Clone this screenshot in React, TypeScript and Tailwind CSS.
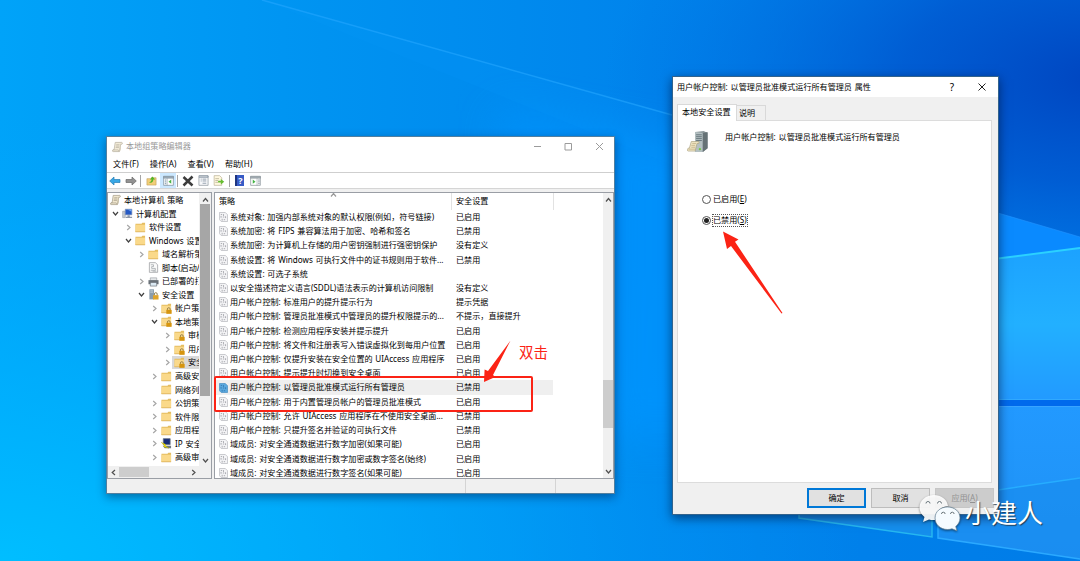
import React from "react";

type TreeItem = {
  label: string;
  level: number;
  icon: "scroll" | "computer" | "folder" | "script" | "printer" | "server" | "locked" | "ip";
  state?: "open" | "closed";
  selected?: boolean;
};

const treeItems: TreeItem[] = [
  { label: "本地计算机 策略", level: 0, icon: "scroll" },
  { label: "计算机配置", level: 1, icon: "computer", state: "open" },
  { label: "软件设置", level: 2, icon: "folder", state: "closed" },
  { label: "Windows 设置", level: 2, icon: "folder", state: "open" },
  { label: "域名解析策略", level: 3, icon: "folder", state: "closed" },
  { label: "脚本(启动/关机)", level: 3, icon: "script" },
  { label: "已部署的打印机", level: 3, icon: "printer", state: "closed" },
  { label: "安全设置", level: 3, icon: "server", state: "open" },
  { label: "帐户策略", level: 4, icon: "locked", state: "closed" },
  { label: "本地策略", level: 4, icon: "locked", state: "open" },
  { label: "审核策略", level: 5, icon: "locked", state: "closed" },
  { label: "用户权限分配", level: 5, icon: "locked", state: "closed" },
  { label: "安全选项", level: 5, icon: "locked", state: "closed", selected: true },
  { label: "高级安全", level: 4, icon: "folder", state: "closed" },
  { label: "网络列表管理器", level: 4, icon: "folder" },
  { label: "公钥策略", level: 4, icon: "folder", state: "closed" },
  { label: "软件限制策略", level: 4, icon: "folder", state: "closed" },
  { label: "应用程序控制", level: 4, icon: "folder", state: "closed" },
  { label: "IP 安全策略", level: 4, icon: "ip", state: "closed" },
  { label: "高级审核策略", level: 4, icon: "folder", state: "closed" },
];

const policies = [
  { name: "系统对象: 加强内部系统对象的默认权限(例如，符号链接)", value: "已启用" },
  { name: "系统加密: 将 FIPS 兼容算法用于加密、哈希和签名", value: "已禁用" },
  { name: "系统加密: 为计算机上存储的用户密钥强制进行强密钥保护", value: "没有定义" },
  { name: "系统设置: 将 Windows 可执行文件中的证书规则用于软件...", value: "已禁用" },
  { name: "系统设置: 可选子系统", value: "" },
  { name: "以安全描述符定义语言(SDDL)语法表示的计算机访问限制", value: "没有定义" },
  { name: "用户帐户控制: 标准用户的提升提示行为", value: "提示凭据" },
  { name: "用户帐户控制: 管理员批准模式中管理员的提升权限提示的...", value: "不提示，直接提升" },
  { name: "用户帐户控制: 检测应用程序安装并提示提升", value: "已启用" },
  { name: "用户帐户控制: 将文件和注册表写入错误虚拟化到每用户位置", value: "已启用" },
  { name: "用户帐户控制: 仅提升安装在安全位置的 UIAccess 应用程序", value: "已启用" },
  { name: "用户帐户控制: 提示提升时切换到安全桌面", value: "已启用" },
  { name: "用户帐户控制: 以管理员批准模式运行所有管理员", value: "已禁用", selected: true },
  { name: "用户帐户控制: 用于内置管理员帐户的管理员批准模式", value: "已启用" },
  { name: "用户帐户控制: 允许 UIAccess 应用程序在不使用安全桌面...", value: "已禁用" },
  { name: "用户帐户控制: 只提升签名并验证的可执行文件", value: "已禁用" },
  { name: "域成员: 对安全通道数据进行数字加密(如果可能)", value: "已启用" },
  { name: "域成员: 对安全通道数据进行数字加密或数字签名(始终)", value: "已启用" },
  { name: "域成员: 对安全通道数据进行数字签名(如果可能)", value: "已启用" },
];

const indents = ["w-0", "w-[13px]", "w-[26px]", "w-[39px]", "w-[52px]", "w-[65px]"];

const Chevron = ({ dir, className = "" }: { dir: "up" | "down" | "left" | "right"; className?: string }) => {
  const paths = {
    up: "M1 5.5 3.5 2.5 6 5.5",
    down: "M1 2 3.5 5 6 2",
    left: "M5 1 2.2 3.5 5 6",
    right: "M2.2 1 5 3.5 2.2 6",
  };
  return (
    <svg viewBox="0 0 7 7" className={`h-[7px] w-[7px] shrink-0 fill-none ${className}`} strokeWidth="1.2">
      <path d={paths[dir]} stroke="currentColor" />
    </svg>
  );
};

const ScrollIcon = ({ className = "" }: { className?: string }) => (
  <svg viewBox="0 0 12 12" className={`h-[12px] w-[11px] shrink-0 ${className}`}>
    <path d="M3.5 1h7.2c.8 0 .8 2 0 2H9.5L8 11H1.2C0 11 .4 9 1.2 9h1.1z" fill="#f0e7cf" stroke="#9b917c" strokeWidth=".7" />
    <path d="M4.6 3.5h3.6M4.3 5h3.6M4 6.5h3.6M1.2 9.2h5.6L8 11" stroke="#958b78" strokeWidth=".6" fill="none" />
    <path d="M9.5 3 8 11c2 0 1.5-5 2-8z" fill="#c9bfa5" />
  </svg>
);

const FolderIcon = ({ locked = false }: { locked?: boolean }) => (
  <svg viewBox="0 0 12 12" className="h-[11px] w-[11px] shrink-0">
    <path d="M.5 2h6.6l.9-1.300H11V11H.5z" fill="#e5bd60" />
    <path d="M.8 3H11V11H.5z" fill="#fad98a" />
    <path d="M.5 10.700h10.500" stroke="#d3a54a" strokeWidth=".7" />
    {locked && (
      <>
        <path d="M7 8V6.600a1.500 1.500 0 0 1 3 0V8" fill="none" stroke="#8b7540" strokeWidth=".9" />
        <rect x="5.800" y="7.500" width="5.800" height="4.300" fill="#d6950f" />
      </>
    )}
  </svg>
);

const PolicyIcon = ({ selected = false }: { selected?: boolean }) => (
  <svg viewBox="0 0 10 11" className="h-[10px] w-[9px] shrink-0">
    <path
      d="M.5.5H7L9.500 3V10.500H2.500L.5 8.500z"
      fill={selected ? "#5ba9df" : "#f4f4f6"}
      stroke={selected ? "#3e87bd" : "#aeb0b6"}
      strokeWidth=".7"
    />
    <path
      d="M2 2.700h1.500M5 2.300v2M2.300 4.300v2M4.300 5.500h1.500M7.300 4.700v2M3.500 7.500v2M5.300 8.500h1.500"
      stroke={selected ? "#2b70a7" : "#8e9097"}
      strokeWidth=".8"
    />
  </svg>
);

const TreeIcon = ({ icon }: { icon: TreeItem["icon"] }) => {
  if (icon === "scroll") return <ScrollIcon />;
  if (icon === "folder") return <FolderIcon />;
  if (icon === "locked") return <FolderIcon locked />;
  return (
    <svg viewBox="0 0 12 12" className="h-[11px] w-[11px] shrink-0">
      {icon === "computer" && (
        <>
          <path d="M.7 3.500h2.800v7H.7z" fill="#c7ccd3" stroke="#7d8793" strokeWidth=".5" />
          <path d="M3.500 1.300h7.300v6.200H3.500z" fill="#2459c4" stroke="#8b9bb8" strokeWidth=".7" />
          <path d="M6 1.700h4.400v2.500z" fill="#75a9f0" />
          <path d="M6 8h2.500v1.500H11v1.400H4V9.500h2z" fill="#8c97a8" />
        </>
      )}
      {icon === "script" && (
        <>
          <path d="M1.500.7H8L10.500 3V11.300h-9z" fill="#fafafa" stroke="#8b8d91" strokeWidth=".7" />
          <path d="M3 3h3v2H4v2h4v2H3M5 10h4" fill="none" stroke="#92969b" strokeWidth=".7" />
        </>
      )}
      {icon === "printer" && (
        <>
          <path d="M2.500 2h7v3h-7z" fill="#e4e7e9" stroke="#8d9297" strokeWidth=".6" />
          <path d="M.5 4.500h11v4.500H.5z" fill="#6c737a" />
          <path d="M2.500 7h7v4h-7z" fill="#dbe9f3" stroke="#4e555b" strokeWidth=".6" />
        </>
      )}
      {icon === "server" && (
        <>
          <path d="M1.500.3h5v11h-5z" fill="#8a9cac" />
          <path d="M2.500 2h3M2.500 3.500h3" stroke="#dbe5ed" strokeWidth=".7" />
          <path d="M7 7V5.500a1.500 1.500 0 0 1 3 0V7" fill="none" stroke="#8b7540" />
          <path d="M5.500 6.700h6v4.800h-6z" fill="#dfa42b" />
        </>
      )}
      {icon === "ip" && (
        <>
          <path d="M2.500.7H10v6.500H2.500z" fill="#172c78" stroke="#65717e" strokeWidth=".8" />
          <path d="M2 8.500h9v2.800H4z" fill="#727a82" />
          <path d="m0 4.500 5 2.200-.4 1.500 4 3-5.500-1.600.4-1.800z" fill="#f1e000" stroke="#9d9800" strokeWidth=".3" />
        </>
      )}
    </svg>
  );
};

const Wallpaper = () => (
  <svg viewBox="0 0 1080 561" className="absolute inset-0 h-full w-full" preserveAspectRatio="none">
    <defs>
      <linearGradient id="base" x1="0" y1="0" x2="1" y2="0">
        <stop offset="0" stopColor="#00a3f9" />
        <stop offset=".3" stopColor="#0093f1" />
        <stop offset=".6" stopColor="#0084ec" />
        <stop offset="1" stopColor="#007ce8" />
      </linearGradient>
      <radialGradient id="corner" cx="0" cy="1" r=".8">
        <stop offset="0" stopColor="#00beff" />
        <stop offset="1" stopColor="#00a8ff" stopOpacity="0" />
      </radialGradient>
      <radialGradient id="dark" cx="1.02" cy=".14" r=".46">
        <stop offset="0" stopColor="#0045c0" />
        <stop offset=".4" stopColor="#0052cc" stopOpacity=".75" />
        <stop offset="1" stopColor="#006ade" stopOpacity="0" />
      </radialGradient>
      <linearGradient id="paneTop" x1="0" y1="0" x2="0" y2="1">
        <stop offset="0" stopColor="#1ca2ff" />
        <stop offset=".5" stopColor="#22b0ff" />
        <stop offset="1" stopColor="#229aff" />
      </linearGradient>
      <linearGradient id="paneLow" x1="0" y1="0" x2="0" y2="1">
        <stop offset="0" stopColor="#2299ff" />
        <stop offset="1" stopColor="#1e91f4" />
      </linearGradient>
      <filter id="soft" x="-30%" y="-30%" width="160%" height="160%">
        <feGaussianBlur stdDeviation="22" />
      </filter>
    </defs>
    <rect width="1080" height="561" fill="url(#base)" />
    <rect width="1080" height="561" fill="url(#corner)" />
    <rect width="1080" height="561" fill="url(#dark)" />
    <path d="M500 110 720 150V440H600V160H500z" fill="#0095ff" opacity=".75" filter="url(#soft)" />
    <path d="M262 0 672 115V165z" fill="#0ba0ff" opacity=".12" />
    <path d="m262 0 410 115" stroke="#25a7ff" strokeWidth="1.500" opacity=".6" />
    <path d="M998 213 1080 237V249L998 259z" fill="#0a8aff" />
    <path d="m998 213 82 24" stroke="#2494ff" opacity=".6" />
    <path d="m998 259 82-11V400H998z" fill="url(#paneTop)" />
    <path d="m998 258.500 82-10.500" stroke="#2bd1ff" strokeWidth="2" />
    <path d="M998 399.500h82" stroke="#30a9ff" />
    <path d="M998 400h82v6H998z" fill="#006aec" />
    <path d="M998 406h82V559L938 538V514h60z" fill="url(#paneLow)" />
    <path d="M998 406.500h82" stroke="#39a4ff" />
    <path d="m998 490 82-12v80L938 538V514h60z" fill="#198cee" opacity=".65" />
    <path d="m998 490 82-12" stroke="#26adff" strokeWidth="1.500" />
    <path d="M799 510h133v27l-133-19z" fill="#158eec" />
    <path d="m799 510v8l133 19v-23" fill="none" stroke="#26b7f0" strokeWidth="1.500" />
    <path d="M938 514v24l142 21" fill="none" stroke="#2ba9ff" strokeWidth="1.500" />
  </svg>
);

const ToolSeparator = ({ className = "" }: { className?: string }) => (
  <div className={`h-[12px] w-px shrink-0 bg-[#a5a5a5] ${className}`} />
);

const Toolbar = () => (
  <div className="flex h-[16px] items-center border-b border-[#d5d5d5] bg-white pl-[2px]">
    <svg viewBox="0 0 12 10" className="h-[10px] w-[12px]">
      <path d="M.7 5 5 1v2.500h6v3H5V9z" fill="#38a8e6" stroke="#277db5" strokeWidth=".7" />
    </svg>
    <svg viewBox="0 0 12 10" className="ml-[4px] h-[10px] w-[12px]">
      <path d="M11.300 5 7 1v2.500H1v3h6V9z" fill="#929292" stroke="#696969" strokeWidth=".7" />
    </svg>
    <ToolSeparator className="ml-[3px]" />
    <svg viewBox="0 0 12 12" className="ml-[5px] h-[11px] w-[11px]">
      <path d="M1 4h4l1-1h5v8H1z" fill="#f2ce79" stroke="#bd9850" strokeWidth=".6" />
      <path d="M3 8c2 0 3-1 3-3H4.300L7 1.500 10 5H8c0 3-2 4-5 3z" fill="#54b527" />
    </svg>
    <div className="ml-[3px] flex h-[15px] w-[16px] items-center justify-center bg-[#cce8ff]">
      <svg viewBox="0 0 12 12" className="h-[11px] w-[11px]">
        <path d="M.7 1.500h10.600v9.800H.7z" fill="#fff" stroke="#81909c" strokeWidth=".8" />
        <path d="M.5 1.500h11v2H.5zM4.500 3.500v8" fill="#9aabb9" stroke="#81909c" strokeWidth=".6" />
        <path d="M2 5.500h1.500M2 7.500h1.500M2 9.500h1.500" stroke="#6e8da2" />
        <path d="m9 5-3 2.300L9 9.600z" fill="#45b345" />
      </svg>
    </div>
    <ToolSeparator className="ml-px" />
    <svg viewBox="0 0 12 12" className="ml-[4px] h-[12px] w-[12px]">
      <path d="m1.500 2 9 8.500M10.500 1.500l-9 9" stroke="#3d3d3d" strokeWidth="2.500" />
    </svg>
    <svg viewBox="0 0 12 12" className="ml-[4px] h-[11px] w-[11px]">
      <path d="M1 .8h10v10.500H1z" fill="#f7f8fa" stroke="#9299a1" strokeWidth=".8" />
      <path d="M1 1h10v1.500H1M3 4.500h1M5 4.500h4M3 6.500h1M5 6.500h4M5 9h4" fill="none" stroke="#8e9baa" />
    </svg>
    <svg viewBox="0 0 12 12" className="ml-[4px] h-[11px] w-[12px]">
      <path d="M.7.7h6L9 3v8.300H.7z" fill="#fff8df" stroke="#b4ab8e" strokeWidth=".7" />
      <path d="M2 4h4M2 6h3M2 8h3" stroke="#a6a083" strokeWidth=".7" />
      <path d="M5 6.200h3V4.300L11.700 7.300 8 10.300v-2H5z" fill="#66bd31" />
    </svg>
    <ToolSeparator className="ml-[4px]" />
    <div className="ml-[5px] flex h-[11px] w-[9px] items-center justify-center border-l-2 border-[#1e3580] bg-[#375bc6] text-[9px] font-bold leading-none text-white">
      ?
    </div>
    <svg viewBox="0 0 12 12" className="ml-[6px] h-[11px] w-[11px]">
      <path d="M.7 1.500h10.600v9.800H.7z" fill="#fff" stroke="#8b949b" strokeWidth=".8" />
      <path d="M.5 1.500h11v2H.5zM7.700 3.500v8" fill="#a4adb5" stroke="#8b949b" strokeWidth=".6" />
      <path d="M9 5.500h1.500M9 7.500h1.500M9 9.500h1.500" stroke="#6e7f8b" />
      <path d="m3 5 3 2.300-3 2.300z" fill="#45b345" />
    </svg>
  </div>
);

const TreePane = () => (
  <div className="flex h-full w-[105px] shrink-0 flex-col border border-[#9a9ea5] bg-white">
    <div className="flex min-h-0 flex-1">
      <div className="w-[91px] shrink-0 overflow-hidden pt-[0.6px]">
        {treeItems.map((item) => (
          <div key={item.label} className="flex h-[13.520px] items-center whitespace-nowrap">
            <div className={`shrink-0 ${indents[item.level]}`} />
            {item.level > 0 && (
              <div className="-ml-[10px] flex w-[9px] shrink-0 justify-center">
                {item.state && (
                  <Chevron
                    dir={item.state === "open" ? "down" : "right"}
                    className={item.state === "open" ? "text-[#404040]" : "text-[#a6a6a6]"}
                  />
                )}
              </div>
            )}
            <div className={`flex h-full items-center pl-[2px] ${item.selected ? "bg-[#d9d9d9]" : ""}`}>
              <TreeIcon icon={item.icon} />
              <span className="ml-[3px]">{item.label}</span>
            </div>
          </div>
        ))}
      </div>
      <div className="flex flex-1 flex-col items-center justify-between bg-[#f0f0f0] pb-[2px]">
        <div className="flex h-[11px] items-center pt-[2px]">
          <Chevron dir="up" className="text-[#505050]" />
        </div>
        <div className="h-[192px] w-[10px] bg-[#a6a6a6]" />
        <div className="flex-1" />
        <Chevron dir="down" className="text-[#505050]" />
      </div>
    </div>
    <div className="flex h-[12px] items-center bg-[#f0f0f0]">
      <Chevron dir="left" className="ml-[2px] text-[#505050]" />
      <div className="ml-[2px] h-[10px] w-[30px] bg-[#cdcdcd]" />
      <Chevron dir="right" className="ml-[41px] text-[#505050]" />
    </div>
  </div>
);

const PolicyPane = () => (
  <div className="relative flex min-w-0 flex-1 overflow-hidden border border-[#9a9ea5] bg-white">
    <div className="w-[388px] shrink-0">
      <div className="flex h-[17px] items-center pr-[49px]">
        <div className="relative flex h-full w-[237px] items-center border-r border-[#e2e2e2] pl-[4px]">
          策略
          <Chevron dir="up" className="absolute left-[115px] top-[-2px] text-[#999]" />
        </div>
        <div className="flex h-full flex-1 items-center border-r border-[#e2e2e2] pl-[4px]">安全设置</div>
      </div>
      {policies.map((policy) => (
        <div key={policy.name} className="flex h-[14.210px] items-center whitespace-nowrap">
          <div className={`flex h-full w-[338px] items-center ${policy.selected ? "bg-[#efefef]" : ""}`}>
            <div className="flex w-[241px] shrink-0 items-center pl-[4px]">
              <PolicyIcon selected={policy.selected} />
              <span className="ml-[2px]">{policy.name}</span>
            </div>
            <span>{policy.value}</span>
          </div>
        </div>
      ))}
    </div>
    <div className="flex flex-1 flex-col items-center bg-[#f0f0f0] pb-[3px] pt-[3px]">
      <Chevron dir="up" className="text-[#505050]" />
      <div className="mt-[177px] h-[48px] w-[10px] bg-[#cdcdcd]" />
      <div className="flex-1" />
      <Chevron dir="down" className="text-[#505050]" />
    </div>
  </div>
);

const PolicyEditor = () => (
  <div className="absolute left-[106px] top-[136px] flex h-[358px] w-[509px] flex-col border border-[#527f9f] bg-[#f0f0f0] shadow-[0_3px_9px_rgba(0,20,60,0.45)]">
    <div className="flex h-[19px] items-center bg-white pl-[5px] text-[#999]">
      <ScrollIcon className="opacity-80" />
      <span className="ml-[3px]">本地组策略编辑器</span>
      <svg viewBox="0 0 70 9" className="ml-auto mr-[10px] h-[9px] w-[70px] fill-none stroke-[#9b9b9b]">
        <path d="M0 4.500h7M31 1.500h6.500v6.500H31zM62 1l7 7M69 1l-7 7" />
      </svg>
    </div>
    <div className="flex h-[17px] items-center gap-[11px] border-b border-[#cfcfcf] bg-white pl-[6px] tracking-[0.1px]">
      <span>文件(F)</span>
      <span>操作(A)</span>
      <span>查看(V)</span>
      <span>帮助(H)</span>
    </div>
    <Toolbar />
    <div className="mt-[3px] flex h-[287px] gap-[2px]">
      <TreePane />
      <PolicyPane />
    </div>
    <div className="flex flex-1">
      <div className="w-[359px] border-r border-[#d4d4d4]" />
      <div className="w-[90px] border-r border-[#d4d4d4]" />
    </div>
  </div>
);

const Radio = ({ checked = false }: { checked?: boolean }) => (
  <div className="flex h-[9px] w-[9px] items-center justify-center rounded-full border border-[#555] bg-white">
    {checked && <div className="h-[5px] w-[5px] rounded-full bg-[#222]" />}
  </div>
);

const PropertiesDialog = () => (
  <div className="absolute left-[672px] top-[76px] flex h-[439px] w-[327px] flex-col border border-[#33638c] bg-[#f0f0f0] shadow-[0_3px_10px_rgba(0,15,50,0.6)]">
    <div className="flex h-[20px] shrink-0 items-center bg-white pl-[4px]">
      <span>用户帐户控制: 以管理员批准模式运行所有管理员 属性</span>
      <span className="ml-auto text-[10px]">?</span>
      <svg viewBox="0 0 8 8" className="ml-[24px] mr-[12px] h-[8px] w-[8px] stroke-[#222]">
        <path d="m.5.5 7 7M7.500.5l-7 7" />
      </svg>
    </div>
    <div className="flex h-[23px] shrink-0 items-end pl-[4px]">
      <div className="relative z-10 -mb-px flex h-[17px] w-[60px] items-center border border-b-0 border-[#d9d9d9] bg-white pb-[2px] pl-[4px]">
        本地安全设置
      </div>
      <div className="flex h-[15px] w-[29px] items-center border border-b-0 border-l-0 border-[#d9d9d9] pl-[2px]">说明</div>
    </div>
    <div className="mx-[4px] mr-[6px] h-[363px] shrink-0 border border-[#dcdcdc] bg-white">
      <div className="flex pl-[9px] pt-[9px]">
        <svg viewBox="0 0 22 24" className="h-[23px] w-[22px]">
          <path d="m8 2 9-1 4 2v16l-5 4H8z" fill="#8d999c" />
          <path d="m8 2 8 1v20H8z" fill="#b4c0c2" />
          <path d="m16 3 5-1v17l-5 4z" fill="#667276" />
          <path d="M9 5h6M9 7h6M9 9h6M9 11h6" stroke="#65747a" />
          <path d="M4 12h8v2h-2l-2 8H1c-2 0-1-3 0-3h1z" fill="#f0e5c4" stroke="#aaa080" strokeWidth=".7" />
          <path d="M5 14h4M4 16h4M4 18h4M1 20h7" stroke="#b8a779" strokeWidth=".7" />
          <circle cx="13" cy="20" r="1.200" fill="#75c943" />
        </svg>
        <span className="ml-[16px] leading-[14px]">用户帐户控制: 以管理员批准模式运行所有管理员</span>
      </div>
      <div className="mt-[40px] flex h-[13px] items-center pl-[24px]">
        <Radio />
        <span className="ml-[2px]">
          已启用(<u>E</u>)
        </span>
      </div>
      <div className="mt-[8px] flex h-[13px] items-center pl-[24px]">
        <Radio checked />
        <span className="ml-px border border-dotted border-[#555] pb-px leading-[10px]">
          已禁用(<u>S</u>)
        </span>
      </div>
    </div>
    <div className="flex flex-1 items-center justify-end gap-[5px] pb-px pr-[4px]">
      <button className="h-[20px] w-[59px] border-2 border-[#0078d7] bg-[#e1e1e1]">确定</button>
      <button className="h-[20px] w-[59px] border border-[#bdbdbd] bg-[#e1e1e1]">取消</button>
      <button className="h-[20px] w-[59px] border border-[#c6c6c6] bg-[#cccccc] text-[#929292]">
        应用(<u>A</u>)
      </button>
    </div>
  </div>
);

const Annotations = () => (
  <>
    <div className="absolute left-[214px] top-[376px] h-[36px] w-[319px] rounded-[2px] border-2 border-[#fb2315]" />
    <svg viewBox="0 0 1080 561" className="absolute inset-0 h-full w-full fill-[#fb2315]">
      <path d="m510.500 340.500-17.500 34.500 2.200 2L484 382l.6-12.500 3.400 1.500z" />
      <path d="m723 231.500 15.500 8-3.500 2.300 47.500 71.200-1 .5-50.500-67.500-4 3z" />
    </svg>
    <span className="absolute left-[519px] top-[342px] text-[14.500px] leading-[20px] text-[#fb2315]">双击</span>
  </>
);

const Watermark = () => (
  <div className="absolute left-[918px] top-[492px] flex items-center">
    <svg viewBox="0 0 44 38" className="h-[38px] w-[44px] drop-shadow-[0_1px_1px_rgba(0,0,0,0.5)]">
      <path d="M16 2C8 2 1.500 7.500 1.500 14.500c0 4 2 7.200 5 9.500L5 29l6-2.500c2 .6 4 .7 6 .5 0-8 6-13.500 13-14C29 6 23 2 16 2z" fill="#fff" opacity=".92" />
      <path d="M29.500 14C22.500 14 17 18.500 17 25s5.500 11.500 12.500 11.500c1.500 0 3-.2 4.500-.7l5 2-1.300-4.300c2.500-2 4.300-5 4.300-8.500 0-6.500-5.500-11-12.500-11z" fill="#f5fbff" stroke="#607d91" strokeWidth=".7" />
      <path d="M8 10.500a2 2 0 0 1 4 0M19.500 10.500a2 2 0 0 1 4 0M23.500 21a1.800 1.800 0 0 1 3.600 0M32.500 21a1.800 1.800 0 0 1 3.600 0" fill="#fff" stroke="#69767c" />
    </svg>
    <span className="ml-[3px] pt-[2px] text-[26px] leading-[38px] text-white [text-shadow:1px_1px_1px_rgba(30,40,50,0.8)]">
      小建人
    </span>
  </div>
);

export default function App() {
  return (
    <div className="relative h-[561px] w-[1080px] overflow-hidden bg-[#0094f1] font-['Noto_Sans','Noto_Sans_CJK_SC',sans-serif] text-[8.100px] leading-none text-black [word-spacing:0.7px]">
      <Wallpaper />
      <PolicyEditor />
      <PropertiesDialog />
      <Annotations />
      <Watermark />
    </div>
  );
}
